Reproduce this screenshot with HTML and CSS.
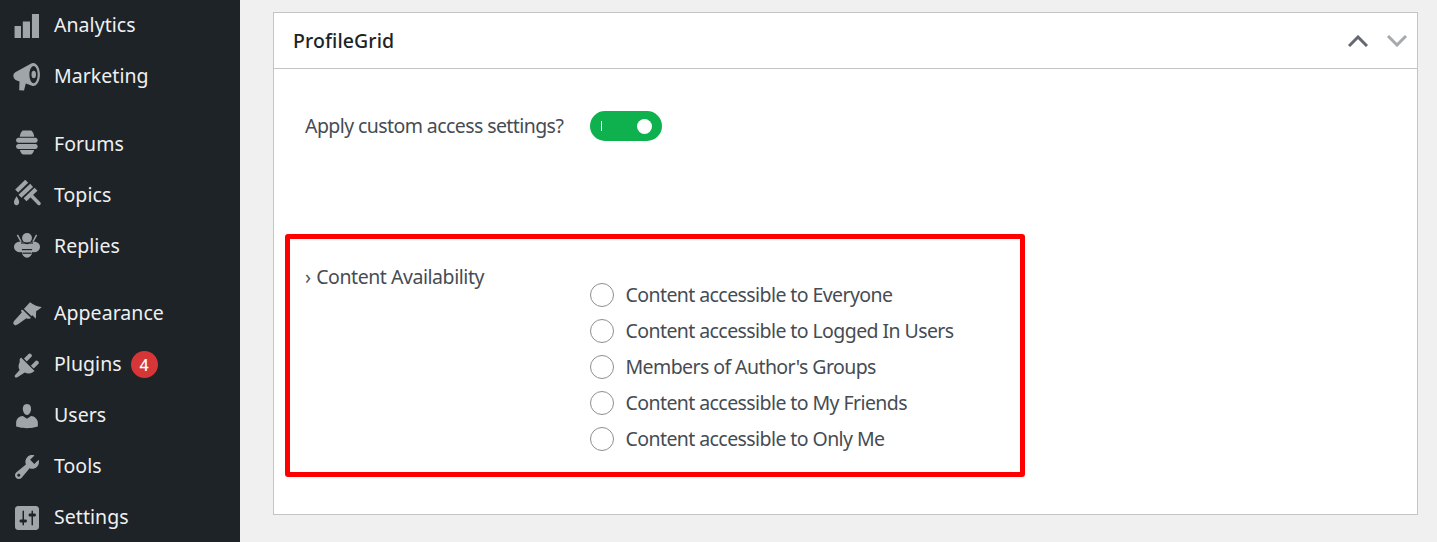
FILE: index.html
```html
<!DOCTYPE html>
<html lang="en">
<head>
<meta charset="utf-8">
<title>ProfileGrid</title>
<link rel="stylesheet" href="styles.css">
</head>
<body>
<div class="page">
  <nav class="sidebar">
    <ul class="menu-group">
      <li class="menu-item"><svg class="menu-icon" viewBox="0 0 20 20"><path d="M18 18V2h-4.700v16H18zm-6 0V7H7.200v11H12zm-6 0v-8H1.700v8H6z"/></svg><span>Analytics</span></li>
      <li class="menu-item"><svg class="menu-icon" viewBox="0 0 20 20"><path fill-rule="evenodd" d="M14.200.6c2.400 0 4.400 3.400 4.400 7.700s-2 7.700-4.400 7.700c-.5 0-.9-.1-1.300-.4L9.200 14.400 8 19l-3.200-.1L5 13 3.200 12.300C1.700 11.800.9 10.500.9 9.200c0-.9.5-1.800 1.300-2.300L12.500 1.100c.5-.3 1.100-.5 1.700-.5zm.2 2c-1.500 0-2.800 2.500-2.800 5.700s1.300 5.800 2.800 5.800 2.700-2.600 2.700-5.800-1.200-5.700-2.700-5.700z"/><ellipse cx="14.500" cy="8.300" rx="1.500" ry="2.500"/></svg><span>Marketing</span></li>
    </ul>
    <ul class="menu-group">
      <li class="menu-item"><svg class="menu-icon" viewBox="0 0 20 20"><path d="M7.200 1h5.600c1 .6 1.900 2.400 2 4.200H5.200c.1-1.800 1-3.600 2-4.200zM4.300 5.900h11.400c.8 0 1.400.7 1.400 1.600s-.6 1.700-1.400 1.700H4.300c-.8 0-1.600-.8-1.600-1.700s.8-1.600 1.600-1.600zM4.300 10h11.400c.8 0 1.400.7 1.400 1.600s-.6 1.700-1.400 1.700H4.300c-.8 0-1.600-.8-1.600-1.700S3.500 10 4.300 10zM5.300 14h9.400c-.1 1.200-.9 2.400-2 3H7.300c-1.100-.6-1.900-1.800-2-3z"/></svg><span>Forums</span></li>
      <li class="menu-item"><svg class="menu-icon" viewBox="0 0 20 20"><g class="stroke-icon"><line x1="3.100" y1="7.400" x2="9.800" y2=".8"/><line x1="5.300" y1="10.800" x2="13.100" y2="3.600"/><line x1="8.700" y1="13.100" x2="16" y2="6.100"/><line class="stroke-round" x1="12.300" y1="9.800" x2="18" y2="15.600"/></g><path d="M3.100 10.800c.8 1.500 1.700 2.600 1.700 3.900 0 1.200-.8 2.200-1.800 2.200S1.300 16 1.300 14.700c0-1.300 1-2.400 1.800-3.900z"/></svg><span>Topics</span></li>
      <li class="menu-item"><svg class="menu-icon" viewBox="0 0 20 20"><ellipse cx="5.500" cy="10.600" rx="4.200" ry="3.600"/><ellipse cx="14.500" cy="10.600" rx="4.200" ry="3.600"/><ellipse cx="10" cy="13.300" rx="3.500" ry="4.600"/><circle cx="10" cy="4.700" r="3.300"/><g class="stroke-icon thin"><line x1="3.600" y1="2.600" x2="6" y2="7"/><line x1="16.400" y1="2.600" x2="14" y2="7"/></g><g class="stroke-dark"><line x1="6.600" y1="12.400" x2="13.400" y2="12.400"/><line x1="7" y1="14.800" x2="13" y2="14.800"/><line x1="6" y1="8" x2="14" y2="8"/></g></svg><span>Replies</span></li>
    </ul>
    <ul class="menu-group">
      <li class="menu-item"><svg class="menu-icon" viewBox="0 0 20 20"><path d="M12 2.100c2.300 1.700 4.800 2.800 7.800 3.300-1 1.300-2.400 2-3.700 2.700l-.2 5.100-2.300-2.300c-.1.300-.4.500-.7.500L8 6.700c0-.3.200-.6.500-.7zM7.300 7.300l5.400 5.400-1.200.4c-.7.200-1.300.1-1.900-.3L4 16.900c-.8.600-1.700.8-2.500.2-.8-.7-.8-1.700-.1-2.500l5.100-5.600c-.4-.6-.5-1.200-.3-1.900z"/></svg><span>Appearance</span></li>
      <li class="menu-item"><svg class="menu-icon" viewBox="0 0 20 20"><path d="M13.110 4.360L9.870 7.600 8 5.730l3.240-3.240c.35-.34 1.050-.2 1.560.32.520.51.660 1.210.310 1.550zM5.110 6.130l.91-1.120 9.010 9.010-1.190.84c-1.600 1.130-3.700 1.150-5.300.16L3.600 18.100c-.4.400-1.100.4-1.500 0s-.4-1.100 0-1.500l3-3.200c-1-1.600-.98-3.700.01-5.270zM17.700 9.110l-3.240 3.240-1.870-1.870 3.240-3.240c.34-.34 1.040-.21 1.560.31.510.52.650 1.210.31 1.560z"/></svg><span>Plugins</span><b class="badge">4</b></li>
      <li class="menu-item"><svg class="menu-icon" viewBox="0 0 20 20"><path d="M10 9.250c-2.270 0-2.730-3.440-2.730-3.440C7 4.020 7.820 2 9.970 2c2.160 0 2.980 2.020 2.710 3.810 0 0-.41 3.440-2.680 3.440zm0 2.570L12.720 10c2.390 0 4.520 2.330 4.520 4.530v2.490s-3.650 1.130-7.240 1.130c-3.650 0-7.240-1.130-7.240-1.130v-2.490c0-2.250 1.940-4.480 4.470-4.480z"/></svg><span>Users</span></li>
      <li class="menu-item"><svg class="menu-icon" viewBox="0 0 20 20"><path d="M16.680 9.770c-1.340 1.340-3.300 1.670-4.950.99l-5.410 6.520c-.99.99-2.590.99-3.580 0s-.99-2.590 0-3.570l6.520-5.420c-.68-1.650-.35-3.610.99-4.950 1.280-1.280 3.120-1.620 4.720-1.060l-2.890 2.890 2.820 2.820 2.860-2.870c.53 1.580.18 3.390-1.080 4.650zM3.810 16.210c.4.390 1.040.39 1.430 0 .4-.4.4-1.040 0-1.430-.39-.4-1.030-.4-1.430 0-.39.39-.39 1.030 0 1.430z"/></svg><span>Tools</span></li>
      <li class="menu-item"><svg class="menu-icon" viewBox="0 0 20 20"><path d="M18 16V4c0-1.100-.9-2-2-2H4c-1.100 0-2 .9-2 2v12c0 1.100.9 2 2 2h12c1.100 0 2-.9 2-2zM8 11h1c.55 0 1 .45 1 1s-.45 1-1 1H8v1.500c0 .28-.22.5-.5.5s-.5-.22-.5-.5V13H6c-.55 0-1-.45-1-1s.45-1 1-1h1V5.500c0-.28.22-.5.5-.5s.5.22.5.5V11zm5-2h-1c-.55 0-1-.45-1-1s.45-1 1-1h1V5.500c0-.28.22-.5.5-.5s.5.22.5.5V7h1c.55 0 1 .45 1 1s-.45 1-1 1h-1v5.500c0 .28-.22.5-.5.5s-.5-.22-.5-.5V9z"/></svg><span>Settings</span></li>
    </ul>
  </nav>
  <main class="main">
    <section class="card">
      <header class="card-head">
        <h2 class="card-title">ProfileGrid</h2>
        <div class="card-actions">
          <svg class="chev chev-up" viewBox="0 0 20 12"><path d="M1 11 10 2l9 9"/></svg>
          <svg class="chev chev-down" viewBox="0 0 20 12"><path d="M1 1l9 9 9-9"/></svg>
        </div>
      </header>
      <div class="card-body">
        <div class="toggle-row">
          <span class="field-label">Apply custom access settings?</span>
          <span class="toggle"><i class="toggle-bar"></i><i class="toggle-knob"></i></span>
        </div>
        <div class="highlight">
          <div class="field-label availability"><span class="marker">›</span> Content Availability</div>
          <div class="radio-list">
            <label class="radio-row"><input class="radio" type="radio" name="access"><span>Content accessible to Everyone</span></label>
            <label class="radio-row"><input class="radio" type="radio" name="access"><span>Content accessible to Logged In Users</span></label>
            <label class="radio-row"><input class="radio" type="radio" name="access"><span>Members of Author's Groups</span></label>
            <label class="radio-row"><input class="radio" type="radio" name="access"><span>Content accessible to My Friends</span></label>
            <label class="radio-row"><input class="radio" type="radio" name="access"><span>Content accessible to Only Me</span></label>
          </div>
        </div>
      </div>
    </section>
  </main>
</div>
</body>
</html>
```
FILE: styles.css
```css
* { box-sizing: border-box; }
html, body { margin: 0; height: 542px; overflow: hidden; }
body {
  background: #f0f0f1;
  font-family: "Noto Sans", "Open Sans", sans-serif;
  font-size: 19.5px;
  letter-spacing: -0.58px;
  color: #454c53;
}
.page { display: flex; height: 542px; }
.sidebar { width: 240px; flex: none; background: #1d2327; color: #f0f0f1; letter-spacing: 0.05px; }
.menu-group { list-style: none; margin: 0 0 16.5px; padding: 0; }
.menu-item { display: flex; align-items: center; height: 51px; padding-left: 12px; }
.menu-item span { padding-bottom: 2px; }
.menu-icon { width: 30px; height: 30px; margin-right: 12px; fill: #a0a5aa; flex: none; overflow: visible; }
.stroke-icon { stroke: #a0a5aa; stroke-width: 2.8; }
.stroke-icon.thin { stroke-width: 1; }
.stroke-round { stroke-linecap: round; stroke-width: 2.4; }
.stroke-dark { stroke: #1d2327; stroke-width: .8; }
.badge {
  display: flex; align-items: center; justify-content: center;
  width: 27px; height: 27px; margin-left: 9px; border-radius: 50%;
  background: #d63638; color: #fff; font-size: 16px; font-weight: 500; letter-spacing: 0;
}
.main { flex: 1; padding: 12px 19px 0 33px; }
.card { height: 503px; background: #fff; border: 1px solid #c3c4c7; }
.card-head {
  display: flex; align-items: center; justify-content: space-between;
  height: 56px; padding: 0 10px 0 19px; border-bottom: 1px solid #c3c4c7;
}
.card-title { margin: 0; font-size: 19.5px; font-weight: 500; letter-spacing: 0.1px; color: #1d2327; }
.card-actions { display: flex; gap: 19px; }
.chev { width: 20px; height: 12px; fill: none; stroke-width: 3; }
.chev-up { stroke: #646970; }
.chev-down { stroke: #a7aaad; }
.card-body { padding: 42px 0 0 11px; }
.toggle-row { display: flex; align-items: center; padding-left: 20px; margin-bottom: 93px; }
.field-label { width: 285px; flex: none; padding-bottom: 2px; }
.toggle {
  display: flex; align-items: center; justify-content: space-between;
  width: 72px; height: 30px; padding: 0 10px 0 11px; border-radius: 15px; background: #0fb04e;
}
.toggle-bar { width: 1px; height: 10px; background: #fff; }
.toggle-knob { width: 15px; height: 15px; border-radius: 50%; background: #fff; }
.highlight {
  display: flex; width: 740px; height: 243px; padding: 24px 0 0 15px;
  border: 5px solid #f00; border-radius: 3px;
}
.availability { line-height: 27px; letter-spacing: -0.45px; }
.marker { color: #50575e; margin-right: 1px; }
.radio-list { display: flex; flex-direction: column; margin-top: 14px; }
.radio-row { display: flex; align-items: center; height: 36px; gap: 11.5px; }
.radio-row span { padding-bottom: 2px; }
.radio {
  appearance: none; width: 24px; height: 24px; margin: 0; flex: none;
  border: 1px solid #8c8f94; border-radius: 50%; background: #fff;
}
```
